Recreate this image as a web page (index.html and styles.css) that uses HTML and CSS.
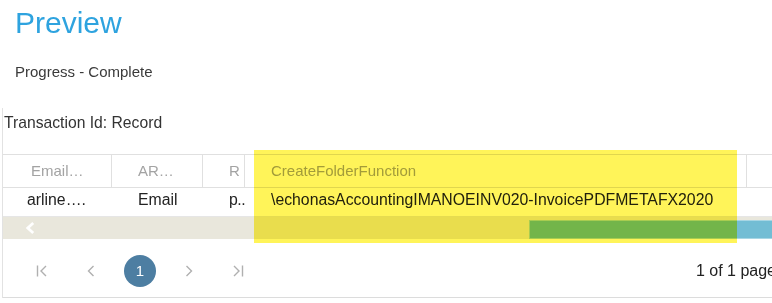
FILE: index.html
```html
<!DOCTYPE html>
<html lang="en">
<head>
  <meta charset="UTF-8">
  <title>Preview</title>
  <link rel="stylesheet" href="styles.css">
</head>
<body>
  <h1 class="title">Preview</h1>
  <p class="status">Progress - Complete</p>

  <div class="grid">
    <div class="grid-caption">Transaction Id: Record</div>

    <div class="grid-row grid-head">
      <div class="cell c1 first">Email…</div>
      <div class="cell c2">AR…</div>
      <div class="cell c3">R</div>
      <div class="cell c4">CreateFolderFunction</div>
      <div class="cell c5"></div>
    </div>

    <div class="grid-row grid-data">
      <div class="cell c1">arline….</div>
      <div class="cell c2">Email</div>
      <div class="cell c3">p..</div>
      <div class="cell c4">\echonasAccountingIMANOEINV020-InvoicePDFMETAFX2020</div>
      <div class="cell c5"></div>
    </div>

    <div class="grid-scroll">
      <svg class="scroll-arrow" width="12" height="14" viewBox="0 0 12 14">
        <path d="M9 1.5 L3 7 L9 12.5" fill="none" stroke="#fff" stroke-width="3"/>
      </svg>
      <div class="scroll-thumb"></div>
    </div>

    <div class="grid-pager">
      <span class="pager-btn">
        <svg width="14" height="14" viewBox="0 0 14 14"><path d="M2.5 1.5 V12.5 M11 2 L6 7 L11 12" fill="none" stroke="#b0b0b0" stroke-width="1.4"/></svg>
      </span>
      <span class="pager-btn">
        <svg width="14" height="14" viewBox="0 0 14 14"><path d="M9.5 2 L4.5 7 L9.5 12" fill="none" stroke="#b0b0b0" stroke-width="1.4"/></svg>
      </span>
      <span class="pager-btn current">1</span>
      <span class="pager-btn">
        <svg width="14" height="14" viewBox="0 0 14 14"><path d="M4.5 2 L9.5 7 L4.5 12" fill="none" stroke="#b0b0b0" stroke-width="1.4"/></svg>
      </span>
      <span class="pager-btn">
        <svg width="14" height="14" viewBox="0 0 14 14"><path d="M3 2 L8 7 L3 12 M11.5 1.5 V12.5" fill="none" stroke="#b0b0b0" stroke-width="1.4"/></svg>
      </span>
      <span class="pager-info">1 of 1 pages</span>
    </div>

    <div class="highlight"></div>
  </div>
</body>
</html>
```

FILE: styles.css
```css
body {
  margin: 0;
  padding: 0;
  background: #fff;
  font-family: "Liberation Sans", Arial, sans-serif;
  color: #333;
  overflow: hidden;
}

.title {
  margin: 0 0 0 15px;
  padding-top: 6px;
  font-size: 30px;
  line-height: 34px;
  font-weight: normal;
  color: #2ea3df;
}

.status {
  margin: 24px 0 0 15px;
  font-size: 15px;
  line-height: 16px;
  color: #3a3a3a;
}

.grid {
  position: relative;
  margin: 28px 0 0 2px;
  width: 800px;
  border-left: 1px solid #e2e2e2;
}

.grid-caption {
  height: 46px;
  box-sizing: border-box;
  padding: 5px 0 0 1px;
  font-size: 15.7px;
  line-height: 20px;
  color: #333;
}

.grid-row {
  display: flex;
}

.grid-head {
  border-top: 1px solid #e0e0e0;
  border-bottom: 1px solid #e0e0e0;
  height: 32px;
  line-height: 32px;
  font-size: 15px;
  color: #a3a3a3;
}

.grid-data {
  border-bottom: 1px solid #e6e6e6;
  height: 29px;
  box-sizing: border-box;
  line-height: 24px;
  font-size: 15.8px;
  color: #222;
}

.cell {
  box-sizing: border-box;
  padding-left: 26px;
  white-space: nowrap;
}

.grid-head .cell {
  overflow: hidden;
  border-right: 1px solid #e0e0e0;
}

.c1 { width: 109px; padding-left: 24px; }
.c1.first { padding-left: 28px; }
.c2 { width: 91px; }
.c3 { width: 42px; }
.c4 { width: 502px; }
.c5 { flex: 1; }

.grid-data .c3 {
  letter-spacing: -0.5px;
}

.grid-scroll {
  display: flex;
  align-items: center;
  height: 22px;
  background: #e9e7dc;
}

.scroll-arrow {
  margin-left: 22px;
}

.scroll-thumb {
  margin-left: 493px;
  align-self: flex-end;
  width: 300px;
  height: 19px;
  box-sizing: border-box;
  background: #73bdd4;
  border: 1px solid #a8d6e4;
}

.grid-pager {
  display: flex;
  align-items: center;
  gap: 17px;
  height: 59px;
  box-sizing: border-box;
  padding: 5px 19px 0 23px;
  border-bottom: 1px solid #dcdcdc;
}

.pager-btn {
  display: flex;
  align-items: center;
  justify-content: center;
  width: 32px;
  height: 32px;
}

.pager-btn.current {
  border-radius: 50%;
  background: #4d7ea2;
  color: #fff;
  font-size: 15px;
}

.pager-info {
  margin-left: auto;
  font-size: 16px;
  color: #222;
}

.highlight {
  position: absolute;
  left: 251px;
  top: 42px;
  width: 483px;
  height: 93px;
  background: #fff459;
  mix-blend-mode: multiply;
}
```
